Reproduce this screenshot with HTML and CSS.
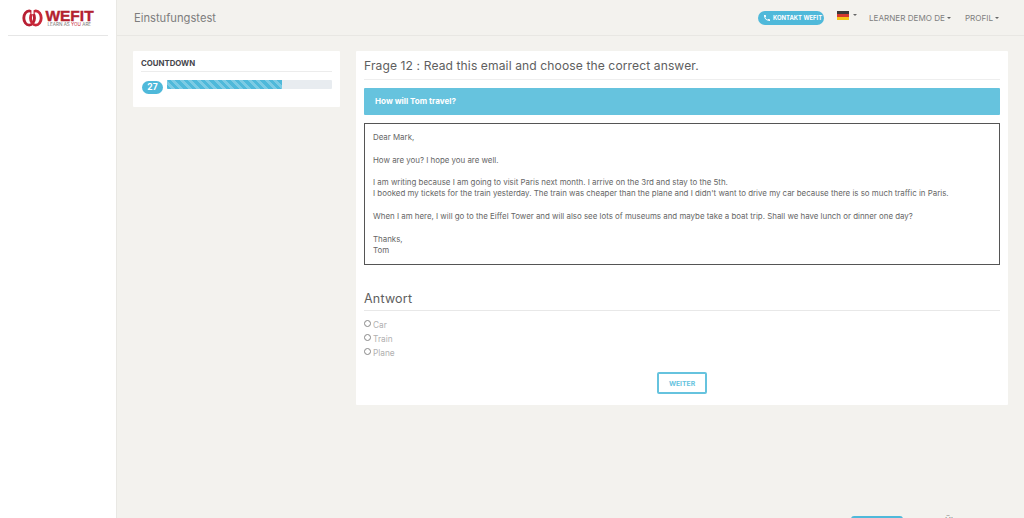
FILE: index.html
```html
<!DOCTYPE html>
<html lang="de">
<head>
<meta charset="utf-8">
<title>Einstufungstest</title>
<link rel="stylesheet" href="styles.css">
</head>
<body>
<div class="app">
  <aside class="sidebar">
    <div class="logo">
      <svg class="logo-mark" width="21" height="18" viewBox="0 0 22 18" aria-hidden="true">
        <ellipse cx="7.5" cy="9" rx="5.6" ry="7.4" fill="none" stroke="#b81f33" stroke-width="3"/>
        <ellipse cx="14.5" cy="9" rx="5.6" ry="7.4" fill="none" stroke="#c9283a" stroke-width="3"/>
        <rect x="9.9" y="0" width="2.2" height="5" fill="#fff"/>
      </svg>
      <div class="logo-text">
        <div class="logo-name">WEFIT</div>
        <div class="logo-tag">LEARN AS <span class="logo-you">YOU</span> ARE</div>
      </div>
    </div>
  </aside>
  <div class="content">
    <header class="topbar">
      <div class="page-title">Einstufungstest</div>
      <nav class="topnav">
        <a class="contact">
          <svg width="8" height="8" viewBox="0 0 24 24" aria-hidden="true"><path fill="#fff" d="M6.6 10.8c1.4 2.8 3.8 5.1 6.6 6.6l2.2-2.2c.3-.3.7-.4 1-.2 1.1.4 2.3.6 3.6.6.6 0 1 .4 1 1V20c0 .6-.4 1-1 1C10.6 21 3 13.4 3 4c0-.6.4-1 1-1h3.500c.6 0 1 .4 1 1 0 1.300.2 2.500.6 3.600.1.300 0 .7-.2 1z"/></svg>
          KONTAKT WEFIT
        </a>
        <span class="flag-item"><span class="flag"><i class="flag-b"></i><i class="flag-r"></i><i class="flag-y"></i></span><i class="caret"></i></span>
        <span class="nav-item">LEARNER DEMO DE<i class="caret"></i></span>
        <span class="nav-item">PROFIL<i class="caret"></i></span>
      </nav>
    </header>
    <main class="main">
      <section class="card countdown">
        <h4 class="countdown-title">COUNTDOWN</h4>
        <div class="countdown-row">
          <span class="count-badge">27</span>
          <div class="progress"><div class="progress-bar" style="width:69.500%"></div></div>
        </div>
      </section>
      <section class="card question">
        <h3 class="question-title">Frage 12 : Read this email and choose the correct answer.</h3>
        <div class="prompt">How will Tom travel?</div>
        <div class="email">
          <p>Dear Mark,</p>
          <p>How are you? I hope you are well.</p>
          <p>I am writing because I am going to visit Paris next month. I arrive on the 3rd and stay to the 5th.<br>I booked my tickets for the train yesterday. The train was cheaper than the plane and I didn't want to drive my car because there is so much traffic in Paris.</p>
          <p>When I am here, I will go to the Eiffel Tower and will also see lots of museums and maybe take a boat trip. Shall we have lunch or dinner one day?</p>
          <p>Thanks,<br>Tom</p>
        </div>
        <h3 class="answer-title">Antwort</h3>
        <div class="options">
          <label class="option"><i class="radio"></i>Car</label>
          <label class="option"><i class="radio"></i>Train</label>
          <label class="option"><i class="radio"></i>Plane</label>
        </div>
        <div class="actions"><button class="next" type="button">WEITER</button></div>
      </section>
    </main>
    <footer class="footer"><span class="footer-btn"></span><span class="footer-text">Über uns</span></footer>
  </div>
</div>
</body>
</html>
```
FILE: styles.css
```css
* { box-sizing: border-box; }
html, body { margin: 0; height: 518px; overflow: hidden; }
body { font-family: "Inter", "Open Sans", "Liberation Sans", sans-serif; background: #f3f2ee; color: #555; }
.app { display: flex; height: 518px; }
.sidebar { width: 117px; flex: none; background: #fff; border-right: 1px solid #e9e8e4; padding: 1px 8px 0; }
.logo { height: 35px; border-bottom: 1px solid #e6e6e6; display: flex; justify-content: center; align-items: center; gap: 2px; }
.logo-text { display: flex; flex-direction: column; }
.logo-name { font-family: "Liberation Sans", sans-serif; font-weight: 700; font-size: 15.500px; line-height: 13px; color: #b3222f; -webkit-text-stroke: .4px #b3222f; }
.logo-tag { font-size: 4.600px; line-height: 5px; color: #777; white-space: nowrap; margin-left: 2px; }
.logo-you { color: #c9283a; }
.content { flex: 1; min-width: 0; display: flex; flex-direction: column; }
.topbar { height: 36px; flex: none; display: flex; align-items: center; justify-content: space-between; border-bottom: 1px solid #e8e7e3; padding: 0 25px 0 17px; }
.page-title { font-size: 11.200px; color: #7d7d7d; }
.topnav { display: flex; align-items: center; color: #808080; font-size: 8.100px; }
.contact { display: flex; align-items: center; gap: 2px; height: 14px; width: 66px; padding-left: 5px; border-radius: 7px; background: #4fb9da; color: #fff; font-size: 5.900px; font-weight: 700; white-space: nowrap; margin-right: 13px; }
.flag-item { display: flex; align-items: center; margin-right: 12px; margin-top: -5px; }
.flag { display: flex; flex-direction: column; width: 12px; height: 9px; margin-right: 2px; }
.flag i { flex: 1; }
.flag-b { background: #3a3a3a; }
.flag-r { background: #d43a2f; }
.flag-y { background: #f5c518; }
.nav-item { display: flex; align-items: center; white-space: nowrap; }
.nav-item + .nav-item { margin-left: 14px; }
.caret { display: inline-block; width: 0; height: 0; margin-left: 2px; border-left: 2.500px solid transparent; border-right: 2.500px solid transparent; border-top: 2.500px solid #666; }
.main { flex: 1; min-height: 0; display: flex; align-items: flex-start; gap: 16px; padding: 15px 16px 0; }
.card { background: #fff; border-radius: 1px; }
.countdown { width: 207px; flex: none; height: 56px; padding: 6px 8px 0; }
.countdown-title { margin: 0; font-size: 7.800px; line-height: 12px; height: 15px; font-weight: 700; color: #45454c; border-bottom: 1px solid #ececec; }
.countdown-row { display: flex; gap: 4px; margin-top: 8px; padding-left: 1px; }
.count-badge { width: 21px; height: 13px; margin-top: 1px; border-radius: 7px; background: #4fb9da; color: #fff; font-size: 8.500px; font-weight: 700; line-height: 13px; text-align: center; }
.progress { flex: 1; height: 9px; background: #e8ecf0; border-radius: 1px; overflow: hidden; }
.progress-bar { height: 100%; background: repeating-linear-gradient(45deg, #4fb9da 0 3px, #7ccbe4 3px 6px); }
.question { flex: 1; height: 354px; padding: 0 8px; min-width: 0; }
.question-title { margin: 0; height: 29px; font-size: 12.100px; line-height: 30px; font-weight: 400; color: #5e5e5e; letter-spacing: .1px; border-bottom: 1px solid #eee; white-space: nowrap; }
.prompt { margin-top: 8px; height: 27px; background: #66c3de; border-radius: 1px; padding-left: 11px; color: #fff; font-size: 8.100px; font-weight: 700; line-height: 26px; }
.email { margin-top: 8px; height: 142px; border: 1px solid #555; padding: 8px 8px 0; font-size: 7.900px; line-height: 11.300px; color: #666; }
.email p { margin: 0 0 11.300px; white-space: nowrap; }
.email p:last-child { margin-bottom: 0; }
.answer-title { margin: 25px 0 0; height: 21px; font-size: 12.500px; line-height: 17px; font-weight: 400; color: #5e5e5e; letter-spacing: .2px; border-bottom: 1px solid #e8e8e8; }
.options { display: flex; flex-direction: column; margin-top: 7px; }
.option { display: flex; align-items: center; gap: 2px; height: 14px; font-size: 8.300px; color: #b0b0b0; }
.radio { width: 7px; height: 7px; border: 1px solid #888; border-radius: 50%; margin-top: -3px; }
.actions { display: flex; justify-content: center; margin-top: 12px; }
.next { width: 50px; height: 22px; padding: 0; background: #fff; border: 2px solid #66c3de; border-radius: 2px; color: #66c3de; font: 700 6.800px "Inter", "Liberation Sans", sans-serif; }
.footer { flex: none; height: 2px; position: relative; }
.footer-btn { position: absolute; left: 734px; top: 0; width: 52px; height: 12px; border-radius: 3px 3px 0 0; background: #4fb9da; }
.footer-text { position: absolute; left: 828px; top: -1px; font-size: 8px; color: #777; }
```
